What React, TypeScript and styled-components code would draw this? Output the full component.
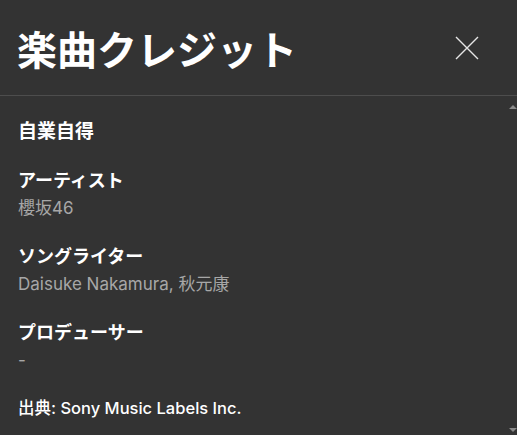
import React from 'react'
import styled, { createGlobalStyle } from 'styled-components'

const GlobalStyle = createGlobalStyle`
  html, body {
    margin: 0;
    padding: 0;
    background: #333333;
  }
  body {
    font-family: Inter, "Noto Sans CJK JP", sans-serif;
    color: #ffffff;
  }
`

const Panel = styled.div`
  width: 517px;
  height: 435px;
  background: #333333;
  position: relative;
  overflow: hidden;
`

const Header = styled.div`
  height: 96px;
  box-sizing: border-box;
  border-bottom: 1px solid #4d4d4d;
  display: flex;
  align-items: center;
  justify-content: space-between;
  padding: 0 38px 0 17px;
`

const Title = styled.h1`
  margin: 0;
  font-family: "Noto Sans CJK JP", sans-serif;
  font-size: 40px;
  font-weight: 700;
  line-height: 1;
`

const CloseButton = styled.button`
  width: 24px;
  height: 24px;
  padding: 0;
  border: none;
  background: none;
  display: flex;
  align-items: center;
  justify-content: center;
  cursor: pointer;
`

const Body = styled.div`
  padding: 20px 18px 0 18px;
  display: flex;
  flex-direction: column;
`

const SongTitle = styled.div`
  font-family: "Noto Sans CJK JP", sans-serif;
  font-size: 19px;
  font-weight: 700;
  line-height: 28px;
  margin-bottom: 22px;
`

const Section = styled.div`
  display: flex;
  flex-direction: column;
  margin-bottom: 18px;
`

const Role = styled.div`
  font-family: "Noto Sans CJK JP", sans-serif;
  font-size: 18px;
  font-weight: 700;
  line-height: 26px;
`

const Names = styled.div`
  font-size: 17px;
  color: #a7a7a7;
  line-height: 32px;
`

const Source = styled.div`
  font-size: 16.5px;
  font-weight: 500;
  line-height: 28px;
`

const ScrollArrow = styled.div<{ $down?: boolean }>`
  position: absolute;
  right: 0;
  width: 0;
  height: 0;
  border-left: 4px solid transparent;
  border-right: 4px solid transparent;
  ${({ $down }) =>
    $down
      ? 'bottom: 3px; border-top: 4px solid #8a8a8a;'
      : 'top: 105px; border-bottom: 4px solid #8a8a8a;'}
`

const credits = [
  { role: 'アーティスト', names: '櫻坂46' },
  { role: 'ソングライター', names: 'Daisuke Nakamura, 秋元康' },
  { role: 'プロデューサー', names: '-' },
]

export default function App() {
  return (
    <>
      <GlobalStyle />
      <Panel>
        <Header>
          <Title>楽曲クレジット</Title>
          <CloseButton aria-label="閉じる">
            <svg width="24" height="24" viewBox="0 0 24 24">
              <path d="M1 1 L23 23 M23 1 L1 23" stroke="#e6e6e6" strokeWidth="1.4" fill="none" />
            </svg>
          </CloseButton>
        </Header>
        <Body>
          <SongTitle>自業自得</SongTitle>
          {credits.map((c) => (
            <Section key={c.role}>
              <Role>{c.role}</Role>
              <Names>{c.names}</Names>
            </Section>
          ))}
          <Source>出典: Sony Music Labels Inc.</Source>
        </Body>
        <ScrollArrow />
        <ScrollArrow $down />
      </Panel>
    </>
  )
}
